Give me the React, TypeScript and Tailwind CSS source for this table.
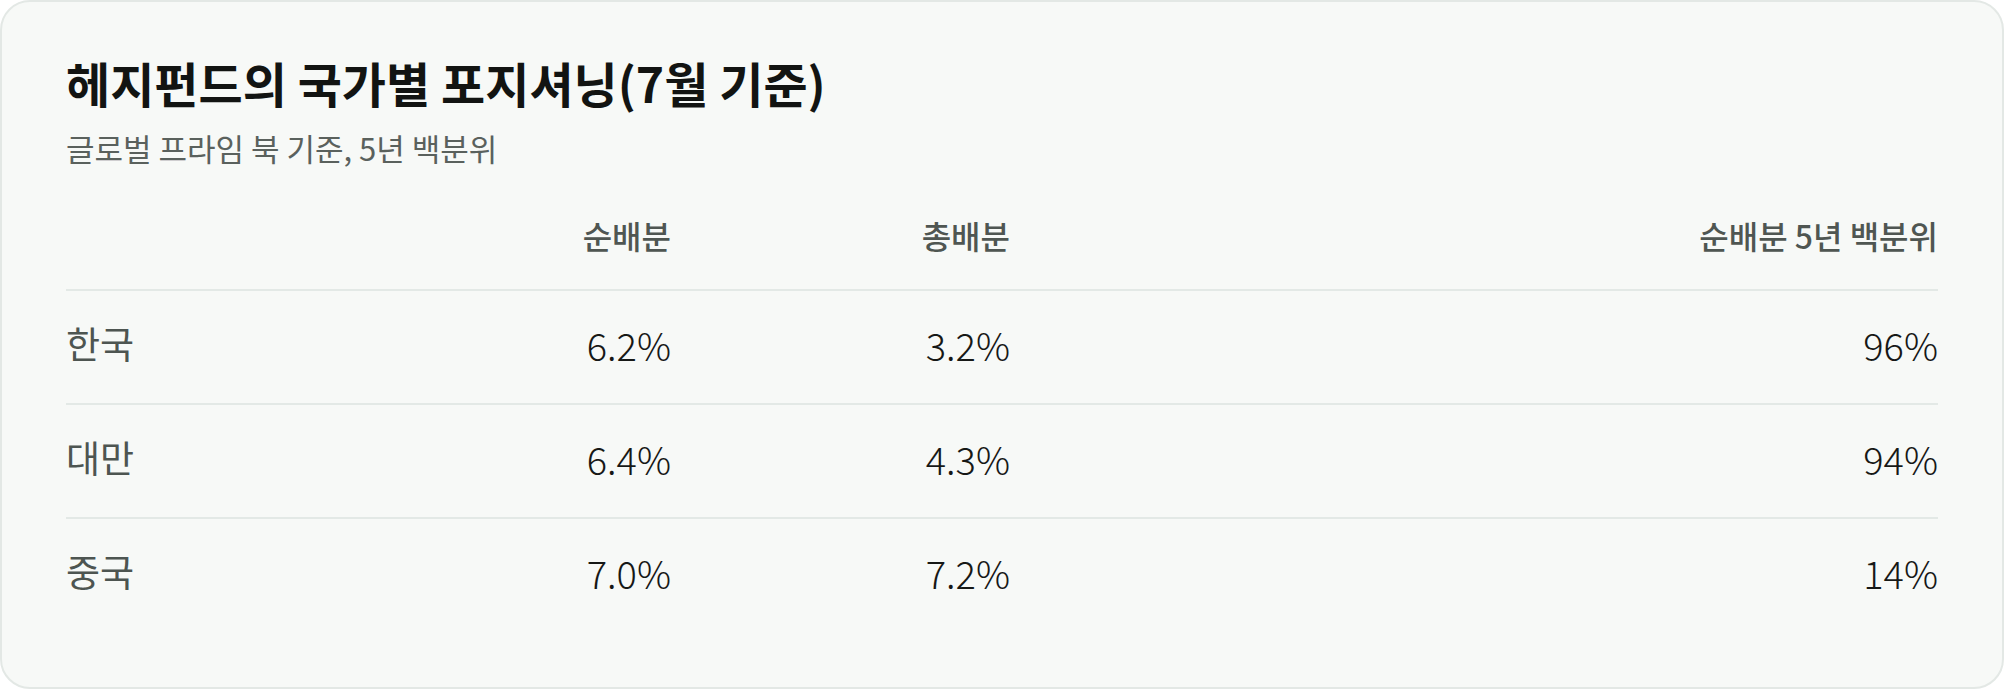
import React from 'react';

const rows = [
  { country: '한국', net: '6.2%', gross: '3.2%', pct: '96%' },
  { country: '대만', net: '6.4%', gross: '4.3%', pct: '94%' },
  { country: '중국', net: '7.0%', gross: '7.2%', pct: '14%' },
];

const App = () => {
  return (
    <div
      className="w-[2004px] h-[689px] bg-white"
      style={{ fontFamily: '"Noto Sans CJK KR", "Noto Sans", sans-serif' }}
    >
      <section className="h-full rounded-[30px] border-2 border-[#e3e8e5] bg-[#f7f9f7] px-[64px] pt-[50px]">
        <h2 className="text-[48px] leading-[60px] font-bold text-[#121412]">
          헤지펀드의 국가별 포지셔닝(7월 기준)
        </h2>
        <p className="mt-[16px] text-[31px] leading-[40px] text-[#5a615d]">
          글로벌 프라임 북 기준, 5년 백분위
        </p>

        <div className="mt-[47px]">
          <div className="grid grid-cols-[418px_187px_339px_1fr] pb-[34px] text-[32px] leading-[40px] font-medium text-[#4f5652]">
            <div />
            <div className="text-right">순배분</div>
            <div className="text-right">총배분</div>
            <div className="text-right">순배분 5년 백분위</div>
          </div>
          {rows.map((r) => (
            <div
              key={r.country}
              className="grid grid-cols-[418px_187px_339px_1fr] items-center h-[114px] pb-[6px] border-t-2 border-[#e3e9e6]"
            >
              <div className="text-[37px] font-normal text-[#4d5551]">{r.country}</div>
              <div className="text-right text-[38px] font-light text-[#161816]">{r.net}</div>
              <div className="text-right text-[38px] font-light text-[#161816]">{r.gross}</div>
              <div className="text-right text-[38px] font-light text-[#161816]">{r.pct}</div>
            </div>
          ))}
        </div>
      </section>
    </div>
  );
};

export default App;
